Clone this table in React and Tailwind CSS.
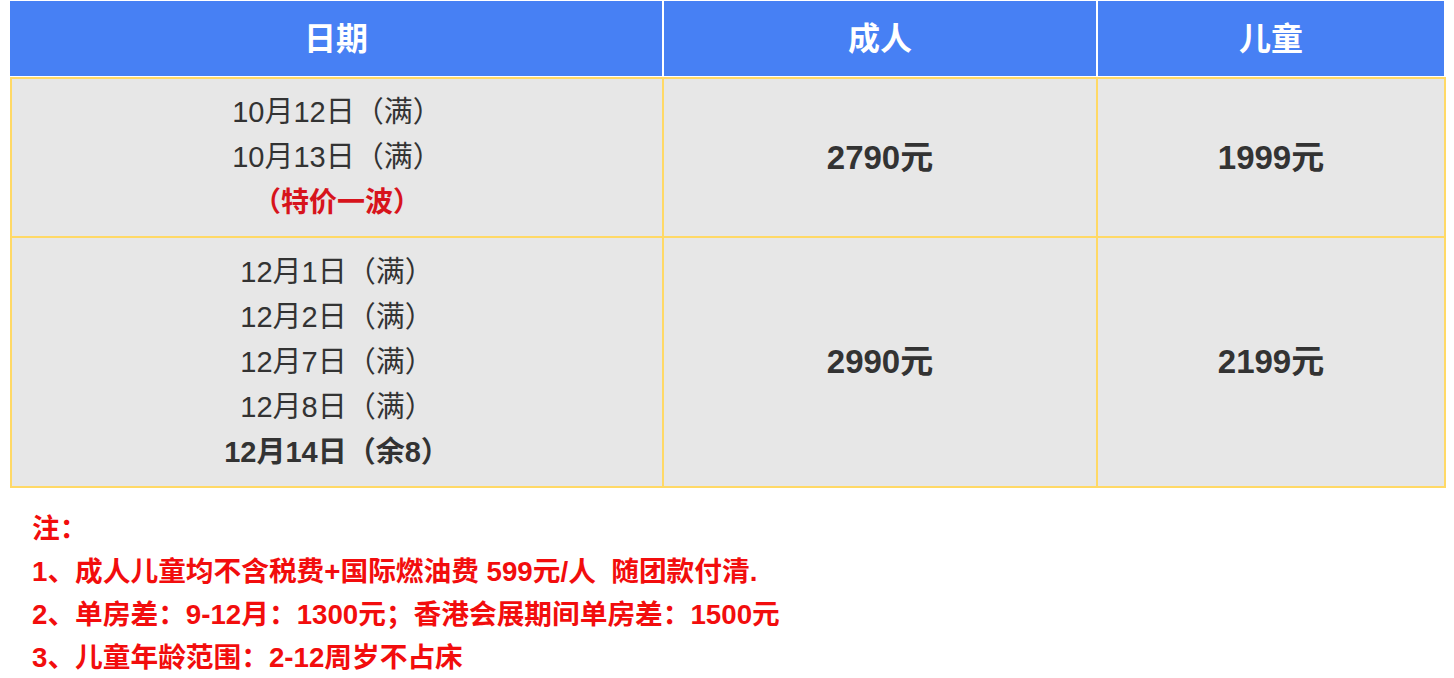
export default function App() {
  const font = { fontFamily: '"Liberation Sans", Arial, "Noto Sans CJK SC", sans-serif' };
  return (
    <div className="w-[1454px] h-[678px] bg-white" style={font}>
      <div className="ml-[10px] w-[1436px] pt-[1px]">
        {/* header */}
        <div className="grid grid-cols-[654px_434px_348px] border-b border-white">
          {["日期", "成人", "儿童"].map((t) => (
            <div
              key={t}
              className="h-[75px] bg-[#4780f4] border-r-2 border-white flex items-center justify-center text-white font-bold text-[32px]"
            >
              {t}
            </div>
          ))}
        </div>
        {/* body */}
        <div className="border-l-2 border-t-2 border-[#ffd966] text-[#333333]">
          <div className="grid grid-cols-[652px_434px_348px] h-[159px]">
            <div className="bg-[#e7e7e7] border-r-2 border-b-2 border-[#ffd966] flex flex-col items-center justify-center text-[29px] leading-[45px]">
              <div>10月12日（满）</div>
              <div>10月13日（满）</div>
              <div className="font-bold text-[#d7141c] text-[28px]">（特价一波）</div>
            </div>
            <div className="bg-[#e7e7e7] border-r-2 border-b-2 border-[#ffd966] flex items-center justify-center text-[33px] font-bold">
              2790元
            </div>
            <div className="bg-[#e7e7e7] border-r-2 border-b-2 border-[#ffd966] flex items-center justify-center text-[33px] font-bold">
              1999元
            </div>
          </div>
          <div className="grid grid-cols-[652px_434px_348px] h-[250px]">
            <div className="bg-[#e7e7e7] border-r-2 border-b-2 border-[#ffd966] flex flex-col items-center justify-center text-[29px] leading-[45px]">
              <div>12月1日（满）</div>
              <div>12月2日（满）</div>
              <div>12月7日（满）</div>
              <div>12月8日（满）</div>
              <div className="font-bold">12月14日（余8）</div>
            </div>
            <div className="bg-[#e7e7e7] border-r-2 border-b-2 border-[#ffd966] flex items-center justify-center text-[33px] font-bold">
              2990元
            </div>
            <div className="bg-[#e7e7e7] border-r-2 border-b-2 border-[#ffd966] flex items-center justify-center text-[33px] font-bold">
              2199元
            </div>
          </div>
        </div>
      </div>
      {/* notes */}
      <div className="pl-[32px] pt-[19px] text-[#f20d0d] font-bold text-[27.7px] leading-[43px]">
        <div>注：</div>
        <div>1、成人儿童均不含税费+国际燃油费 599元/人&nbsp;&nbsp;随团款付清.</div>
        <div>2、单房差：9-12月：1300元；香港会展期间单房差：1500元</div>
        <div>3、儿童年龄范围：2-12周岁不占床</div>
      </div>
    </div>
  );
}
